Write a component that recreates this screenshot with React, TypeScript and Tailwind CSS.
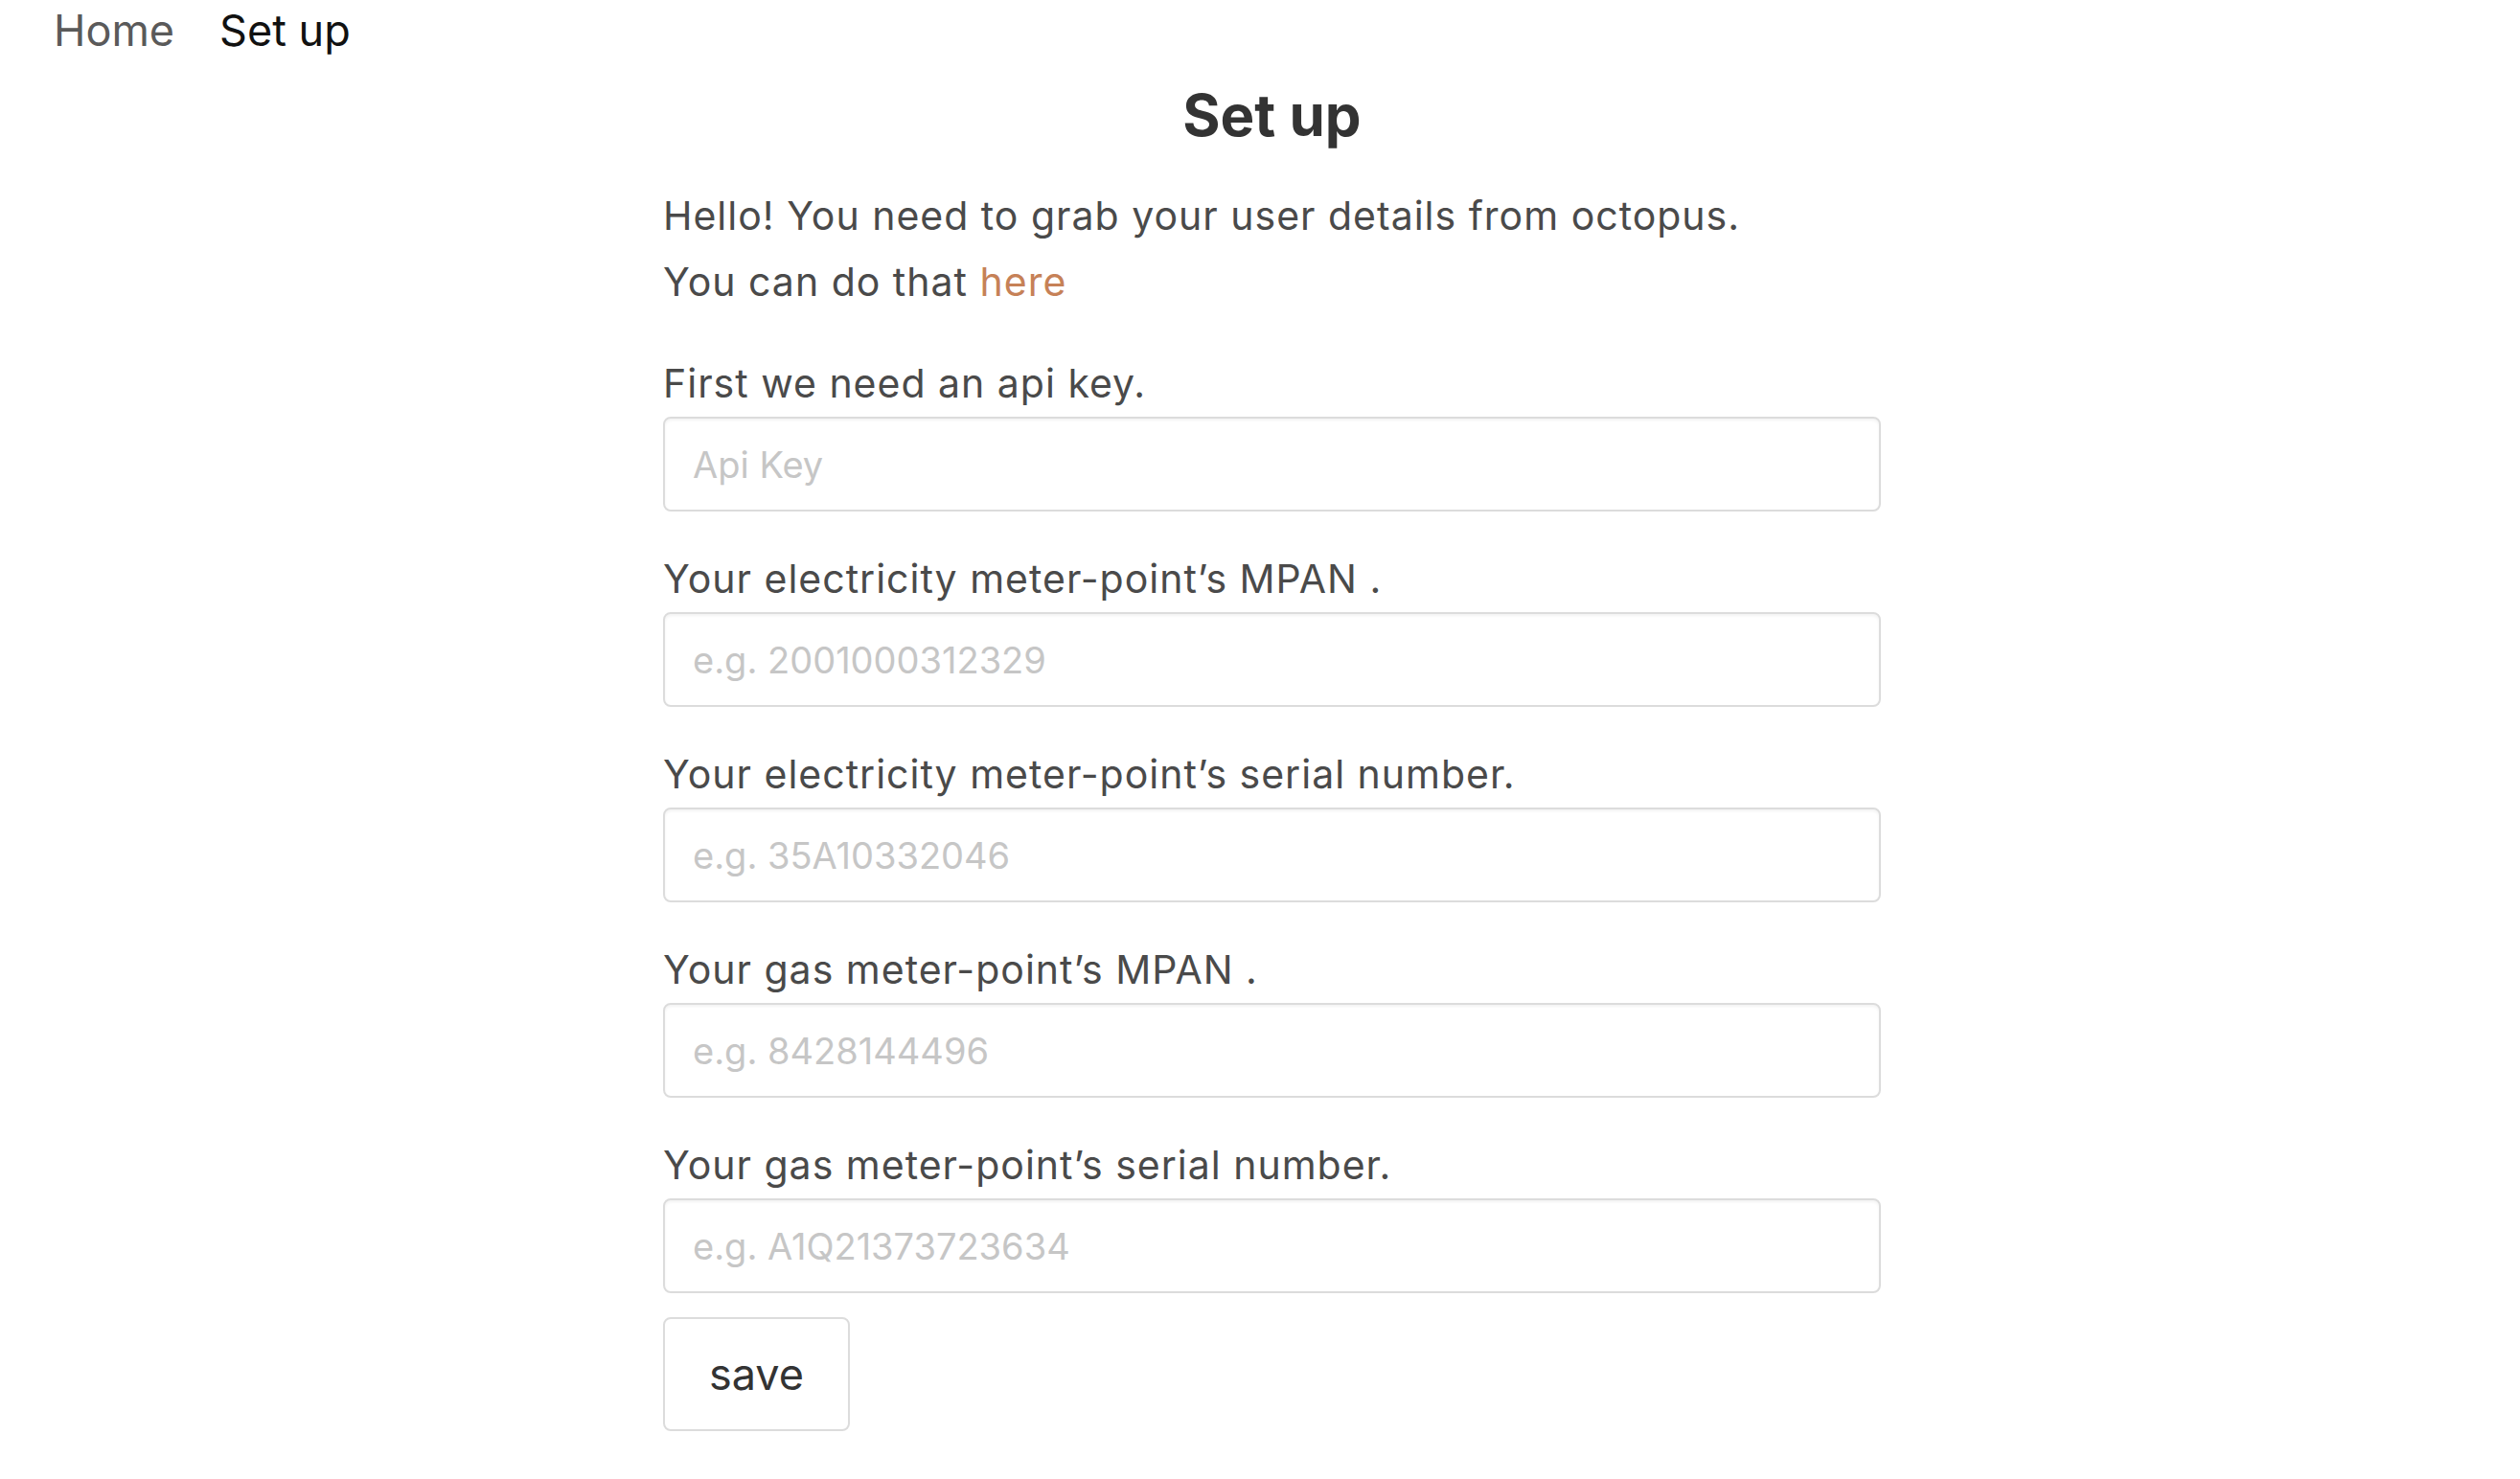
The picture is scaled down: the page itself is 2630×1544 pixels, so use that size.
import React from 'react';

const fields = [
  { label: 'First we need an api key.', placeholder: 'Api Key' },
  { label: 'Your electricity meter-point’s MPAN .', placeholder: 'e.g. 2001000312329' },
  { label: 'Your electricity meter-point’s serial number.', placeholder: 'e.g. 35A10332046' },
  { label: 'Your gas meter-point’s MPAN .', placeholder: 'e.g. 8428144496' },
  { label: 'Your gas meter-point’s serial number.', placeholder: 'e.g. A1Q21373723634' },
];

export default function App() {
  return (
    <div className="min-h-screen bg-white font-['Inter',sans-serif] text-[#4a4a4a]">
      <nav className="flex gap-[47px] pl-[56px] text-[45px] leading-[64px]">
        <a className="text-[#5a5a5a]">Home</a>
        <a className="text-[#111111]">Set up</a>
      </nav>

      <div className="pl-[25px]">
        <main className="mx-auto w-[1271px]">
          <h1 className="mt-[20px] text-center text-[60px] font-bold leading-[72px] text-[#333333]">Set up</h1>

          <p className="mt-[35px] text-[41px] leading-[69px] tracking-[1px]">
            Hello! You need to grab your user details from octopus.
            <br />
            You can do that <a className="text-[#c68157]">here</a>
          </p>

          <form className="mt-[36px] flex flex-col">
            {fields.map((field, index) => (
              <div key={index} className={index === 0 ? '' : 'mt-[35px]'}>
                <label className="block text-[41px] leading-[70px] tracking-[1px]">{field.label}</label>
                <input
                  type="text"
                  placeholder={field.placeholder}
                  className="block h-[99px] w-full rounded-[8px] border-2 border-[#dcdcdc] bg-white px-[29px] text-[38px] text-[#333333] shadow-[inset_0_2px_3px_rgba(0,0,0,0.05)] outline-none placeholder:text-[#c6c6c6]"
                />
              </div>
            ))}
            <div className="mt-[25px]">
              <button
                type="button"
                className="h-[119px] w-[195px] rounded-[8px] border-2 border-[#dcdcdc] bg-white text-[45px] text-[#333333]"
              >
                save
              </button>
            </div>
          </form>
        </main>
      </div>
    </div>
  );
}
